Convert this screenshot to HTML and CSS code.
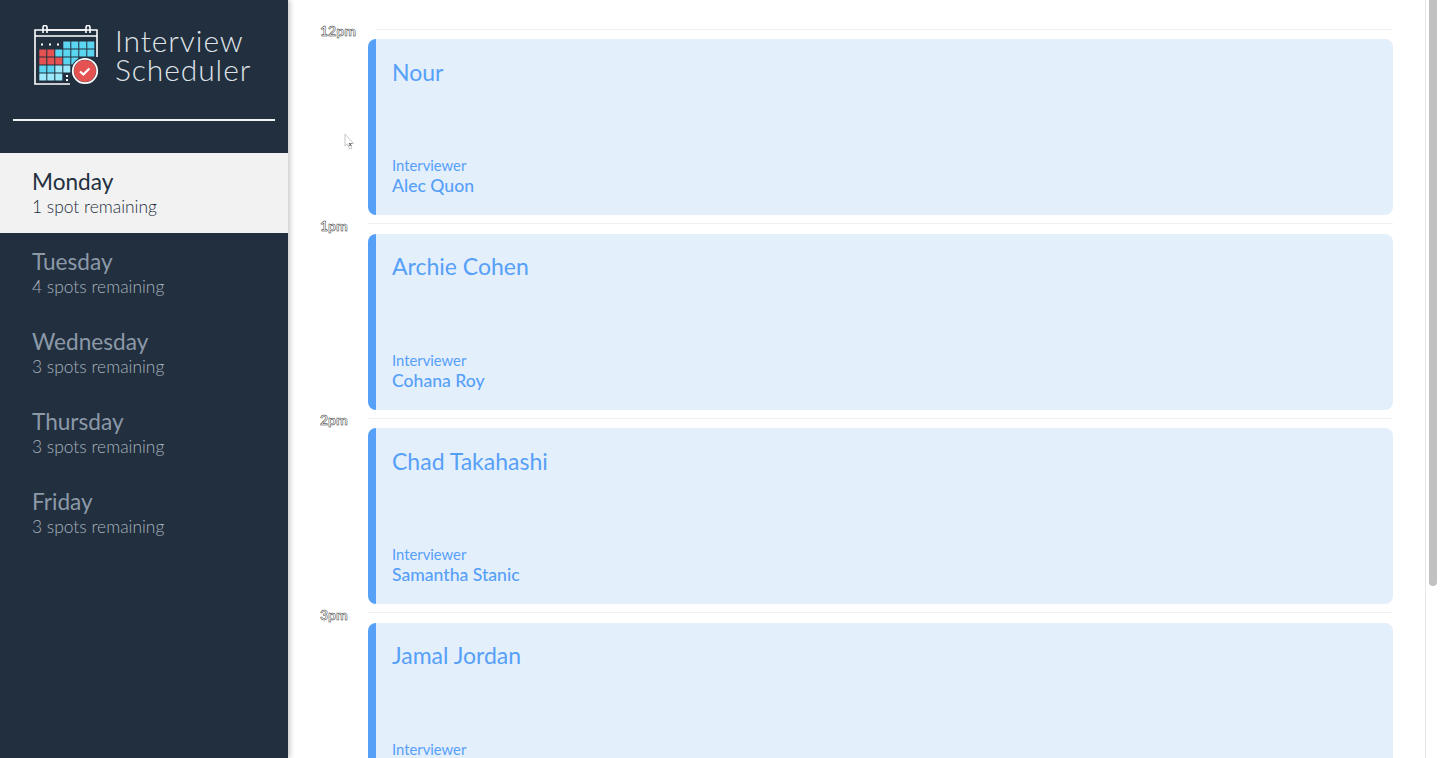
FILE: index.html
```html
<!DOCTYPE html>
<html lang="en">
<head>
<meta charset="utf-8">
<title>Interview Scheduler</title>
<link rel="stylesheet" href="styles.css">
</head>
<body>
<div class="layout">
  <aside class="sidebar">
    <div class="brand">
      <svg class="logo" width="66" height="62" viewBox="33 25 66 62" aria-hidden="true">
        <g fill="none" stroke="#fff" stroke-width="1.6">
          <path d="M70 84H35V30H97V57"/>
          <path d="M35 36H97"/>
          <path d="M43 33V27.5a2 2 0 0 1 4 0V33M86 33V27.5a2 2 0 0 1 4 0V33M47 30H86"/>
        </g>
        <g fill="#fff">
          <rect x="41" y="43.5" width="2" height="2"/><rect x="49" y="43.5" width="2" height="2"/><rect x="57" y="43.5" width="2" height="2"/>
          <rect x="66" y="75" width="2" height="2"/><rect x="66" y="79" width="2" height="2"/>
        </g>
        <g fill="#5cd6f0">
          <rect x="63.3" y="41.5" width="7" height="7"/><rect x="71.3" y="41.5" width="7" height="7"/><rect x="79.3" y="41.5" width="7" height="7"/><rect x="87.3" y="41.5" width="7" height="7"/>
          <rect x="55.3" y="49.5" width="7" height="7"/><rect x="63.3" y="49.5" width="7" height="7"/><rect x="71.3" y="49.5" width="7" height="7"/><rect x="79.3" y="49.5" width="7" height="7"/><rect x="87.3" y="49.5" width="7" height="7"/>
          <rect x="63.3" y="57.5" width="7" height="7"/><rect x="71.3" y="57.5" width="7" height="7"/>
          <rect x="39.3" y="65.5" width="7" height="7"/><rect x="47.3" y="65.5" width="7" height="7"/>
        </g>
        <g fill="#9ce9fb">
          <rect x="55.3" y="65.5" width="7" height="7"/><rect x="63.3" y="65.5" width="7" height="7"/>
          <rect x="39.3" y="73.5" width="7" height="7"/><rect x="47.3" y="73.5" width="7" height="7"/><rect x="55.3" y="73.5" width="7" height="7"/>
        </g>
        <g fill="#e45252">
          <rect x="39.3" y="49.5" width="7" height="7"/><rect x="47.3" y="49.5" width="7" height="7"/>
          <rect x="39.3" y="57.5" width="7" height="7"/><rect x="47.3" y="57.5" width="7" height="7"/><rect x="55.3" y="57.5" width="7" height="7"/>
        </g>
        <circle cx="85" cy="71" r="12.5" fill="#e45252" stroke="#222f3e" stroke-width="3"/>
        <circle cx="85" cy="71" r="12.2" fill="none" stroke="#fff" stroke-width="1.8"/>
        <path d="M80 71.5l3.4 3 6-6" fill="none" stroke="#fff" stroke-width="2.2"/>
      </svg>
      <h1 class="brand-name">Interview<br>Scheduler</h1>
    </div>
    <hr class="divider">
    <nav class="days">
      <div class="day day-selected"><h2 class="day-name">Monday</h2><p class="day-spots">1 spot remaining</p></div>
      <div class="day"><h2 class="day-name">Tuesday</h2><p class="day-spots">4 spots remaining</p></div>
      <div class="day"><h2 class="day-name">Wednesday</h2><p class="day-spots">3 spots remaining</p></div>
      <div class="day"><h2 class="day-name">Thursday</h2><p class="day-spots">3 spots remaining</p></div>
      <div class="day"><h2 class="day-name">Friday</h2><p class="day-spots">3 spots remaining</p></div>
    </nav>
  </aside>
  <main class="schedule">
    <section class="slot">
      <div class="slot-head"><span class="time">12pm</span><span class="rule rule-first"></span></div>
      <article class="card"><h3 class="student">Nour</h3><div class="staff"><p class="staff-label">Interviewer</p><p class="staff-name">Alec Quon</p></div></article>
    </section>
    <section class="slot">
      <div class="slot-head"><span class="time">1pm</span><span class="rule"></span></div>
      <article class="card"><h3 class="student">Archie Cohen</h3><div class="staff"><p class="staff-label">Interviewer</p><p class="staff-name">Cohana Roy</p></div></article>
    </section>
    <section class="slot">
      <div class="slot-head"><span class="time">2pm</span><span class="rule"></span></div>
      <article class="card"><h3 class="student">Chad Takahashi</h3><div class="staff"><p class="staff-label">Interviewer</p><p class="staff-name">Samantha Stanic</p></div></article>
    </section>
    <section class="slot">
      <div class="slot-head"><span class="time">3pm</span><span class="rule"></span></div>
      <article class="card"><h3 class="student">Jamal Jordan</h3><div class="staff"><p class="staff-label">Interviewer</p><p class="staff-name">Lydia Miller-Jones</p></div></article>
    </section>
  </main>
  <div class="scrollbar"><div class="scroll-thumb"></div></div>
  <svg class="cursor" width="12" height="20" viewBox="0 0 12 20" aria-hidden="true">
    <path d="M1 1V13L3.5 11L5.5 16L8 15L6 10.500H9.500Z" fill="#fff" stroke="#b8b8b8" stroke-width="0.8"/>
    <path d="M5 10l2.500 3M7.500 10L5 13" stroke="#555" stroke-width="0.9"/>
  </svg>
</div>
</body>
</html>
```
FILE: styles.css
```css
* { box-sizing: border-box; }
html, body { margin: 0; height: 100%; overflow: hidden; background: #fff; }
body { font-family: "Lato", "Noto Sans", sans-serif; }
h1, h2, h3, p { margin: 0; }

.layout { position: relative; display: flex; height: 758px; overflow: hidden; }

.sidebar {
  flex: 0 0 288px;
  background: #222f3e;
  box-shadow: 2px 0 5px rgba(0, 0, 0, 0.22);
  position: relative;
  z-index: 1;
}
.brand { display: flex; align-items: flex-start; gap: 16px; padding: 25px 0 0 33px; height: 118px; }
.logo { flex: none; }
.brand-name {
  font-weight: 300;
  font-size: 30px;
  line-height: 29px;
  letter-spacing: 0.9px;
  color: #dfe3e8;
  margin-top: 1px;
}
.divider { height: 2px; margin: 1px 13px 32px; border: 0; background: #f2f2f2; }

.day { height: 80px; padding: 15px 32px 0; color: #8c99a8; }
.day-selected { background: #f2f2f2; color: #222f3e; }
.day-name { font-size: 22.6px; font-weight: 400; line-height: 28px; }
.day-spots { font-size: 17.4px; font-weight: 300; line-height: 22px; }
.day:not(.day-selected) .day-spots { color: #a7b1bd; }

.schedule { flex: 1; min-width: 0; padding: 24px 32px 0 32px; margin-right: 15px; }
.slot { height: 194.67px; display: flex; flex-direction: column; }
.slot-head { display: flex; align-items: center; height: 10px; margin-bottom: 5px; }
.time {
  flex: 0 0 48px;
  margin-top: 4px;
  font-size: 14px;
  font-weight: 700;
  line-height: 14px;
  color: #fff;
  -webkit-text-stroke: 0.45px #222;
  white-space: nowrap;
}
.rule { flex: 1; height: 1px; background: #f0f0f0; }
.rule-first { margin-left: 7px; }

.card {
  margin-left: 48px;
  height: 176px;
  background: #e4effc;
  border-left: 8px solid #56a0f8;
  border-radius: 8px;
  padding: 18.500px 16px 19px;
  color: #56a0f8;
  display: flex;
  flex-direction: column;
  justify-content: space-between;
}
.student { font-size: 23px; font-weight: 400; line-height: 28px; }
.staff-label { font-size: 14.8px; font-weight: 400; line-height: 21px; }
.staff-name { font-size: 17.6px; font-weight: 500; line-height: 20px; }

.scrollbar {
  position: absolute;
  top: 0; right: 0; bottom: 0;
  width: 15px;
  background: #fff;
  border-left: 1px solid #e8e8e8;
  padding-left: 3px;
  z-index: 2;
}
.scroll-thumb { width: 8px; height: 586px; background: #c1c1c1; border-radius: 0 0 4px 4px; }
.cursor { position: absolute; left: 344px; top: 133px; z-index: 3; }
```
